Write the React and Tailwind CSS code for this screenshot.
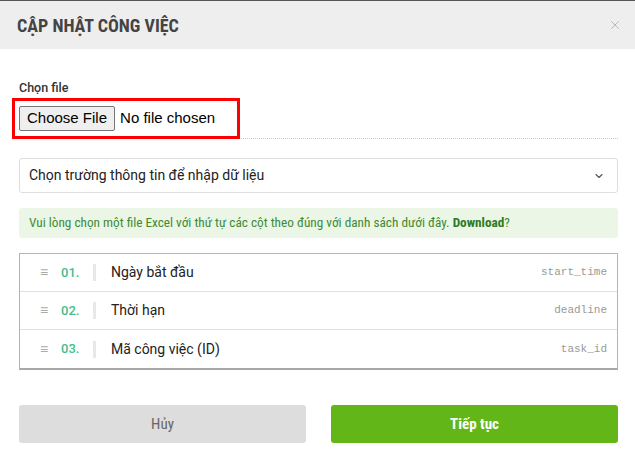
import { ChevronDown, X } from "lucide-react"

const narrow = "font-['Roboto_Condensed',Roboto,sans-serif]"

const truong = [
    { so: "01.", ten: "Ngày bắt đầu", ma: "start_time" },
    { so: "02.", ten: "Thời hạn", ma: "deadline" },
    { so: "03.", ten: "Mã công việc (ID)", ma: "task_id" },
]

export default function App() {
    return (
        <div className="w-[635px] h-[471px] bg-white border-t border-[#555] font-['Roboto',sans-serif] overflow-hidden">
            {/* Tiêu đề */}
            <div className="h-[48px] bg-[#eeeeee] flex items-center justify-between pl-[17px] pr-[13px]">
                <h1 className={`${narrow} text-[18px] font-bold text-[#444]`}>CẬP NHẬT CÔNG VIỆC</h1>
                <X size={14} strokeWidth={1.6} className="text-[#b5b5b5]" />
            </div>

            <div className="pl-[19px] pr-[17px] pt-[31px]">
                {/* Chọn file */}
                <label className="block text-[12.5px] font-medium text-[#333] leading-4">Chọn file</label>
                <div className="relative mt-[10px] h-[33px] border-b border-dotted border-[#c8c8c8] flex items-start">
                    <input type="file" className="text-[15px] font-['Liberation_Sans',Arial,sans-serif] text-black file:mr-[5px] file:px-[7px] file:py-0 file:border file:border-[#767676] file:rounded-[2px] file:bg-[#efefef] file:text-[15px] file:text-black file:font-['Liberation_Sans',Arial,sans-serif]" />
                    <div className="absolute left-[-7px] top-[-8px] w-[228px] h-[41px] border-[3px] border-[#ff0000] pointer-events-none"></div>
                </div>

                {/* Chọn trường */}
                <div className="mt-[19px] h-[35px] border border-[#dedede] rounded-[3px] flex items-center justify-between pl-[9px] pr-[12px]">
                    <span className="text-[14px] text-[#222]">Chọn trường thông tin để nhập dữ liệu</span>
                    <ChevronDown size={12} strokeWidth={2.2} className="text-[#555]" />
                </div>

                {/* Thông báo */}
                <div className={`${narrow} mt-[15px] h-[30px] bg-[#ebf6e7] rounded-[3px] flex items-center pl-[10px] text-[13.25px] text-[#3f8a34]`}>
                    <span>Vui lòng chọn một file Excel với thứ tự các cột theo đúng với danh sách dưới đây. <b className="font-bold text-[#2f7a26]">Download</b>?</span>
                </div>

                {/* Danh sách cột */}
                <div className="mt-[15px] border border-[#b4b4b4] border-b-2 border-b-[#a8a8a8]">
                    {truong.map((t, i) => (
                        <div key={t.so} className={`h-[38px] flex items-center pl-[20px] pr-[10px] ${i < truong.length - 1 ? "border-b border-[#e0e0e0]" : ""}`}>
                            <span className="text-[14px] text-[#aaa] w-[21px]">≡</span>
                            <span className="text-[13px] font-medium text-[#45bd8c] w-[32px]">{t.so}</span>
                            <span className="w-[3px] h-[17px] bg-[#e8e8e8] mr-[15px]"></span>
                            <span className="text-[14px] text-[#222] flex-1">{t.ten}</span>
                            <span className="text-[11px] text-[#999] font-['Liberation_Mono',monospace]">{t.ma}</span>
                        </div>
                    ))}
                </div>

                {/* Nút */}
                <div className="mt-[35px] grid grid-cols-2 gap-[25px]">
                    <button className={`${narrow} h-[38px] bg-[#dddddd] rounded-[3px] text-[15px] text-[#666]`}>Hủy</button>
                    <button className={`${narrow} h-[38px] bg-[#62b617] rounded-[3px] text-[15px] font-bold text-white`}>Tiếp tục</button>
                </div>
            </div>
        </div>
    )
}
